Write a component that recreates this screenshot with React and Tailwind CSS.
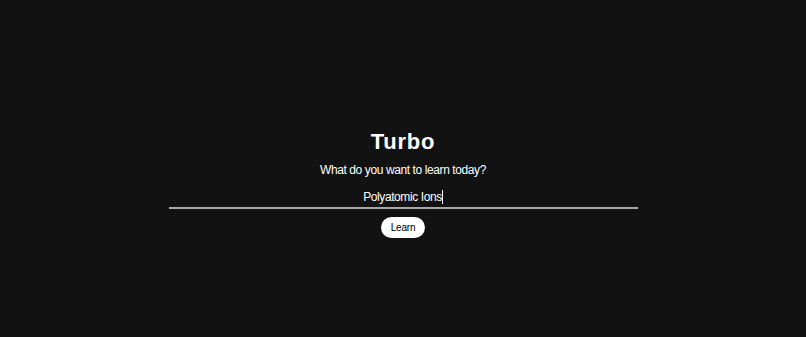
export default function App() {
  return (
    <div className="min-h-screen bg-[#121212] flex flex-col items-center pt-[127px] font-['Liberation_Sans',Arial,sans-serif] text-white">
      <h1 className="text-[22px] leading-[30px] font-bold tracking-[0.8px]">Turbo</h1>
      <p className="mt-[6px] text-[12px] leading-[15px] tracking-[-0.4px]">What do you want to learn today?</p>
      <div className="mt-[9px] w-[469px] border-b-2 border-[#a8a8a8] h-[22px] flex items-center justify-center">
        <span className="text-[12px] leading-[15px] tracking-[-0.4px]">Polyatomic Ions</span>
        <span className="w-px h-[14px] bg-white"></span>
      </div>
      <button className="mt-[8px] h-[21px] px-[10px] rounded-full bg-white text-black text-[10px] leading-[12px] tracking-[-0.2px]">
        Learn
      </button>
    </div>
  );
}
